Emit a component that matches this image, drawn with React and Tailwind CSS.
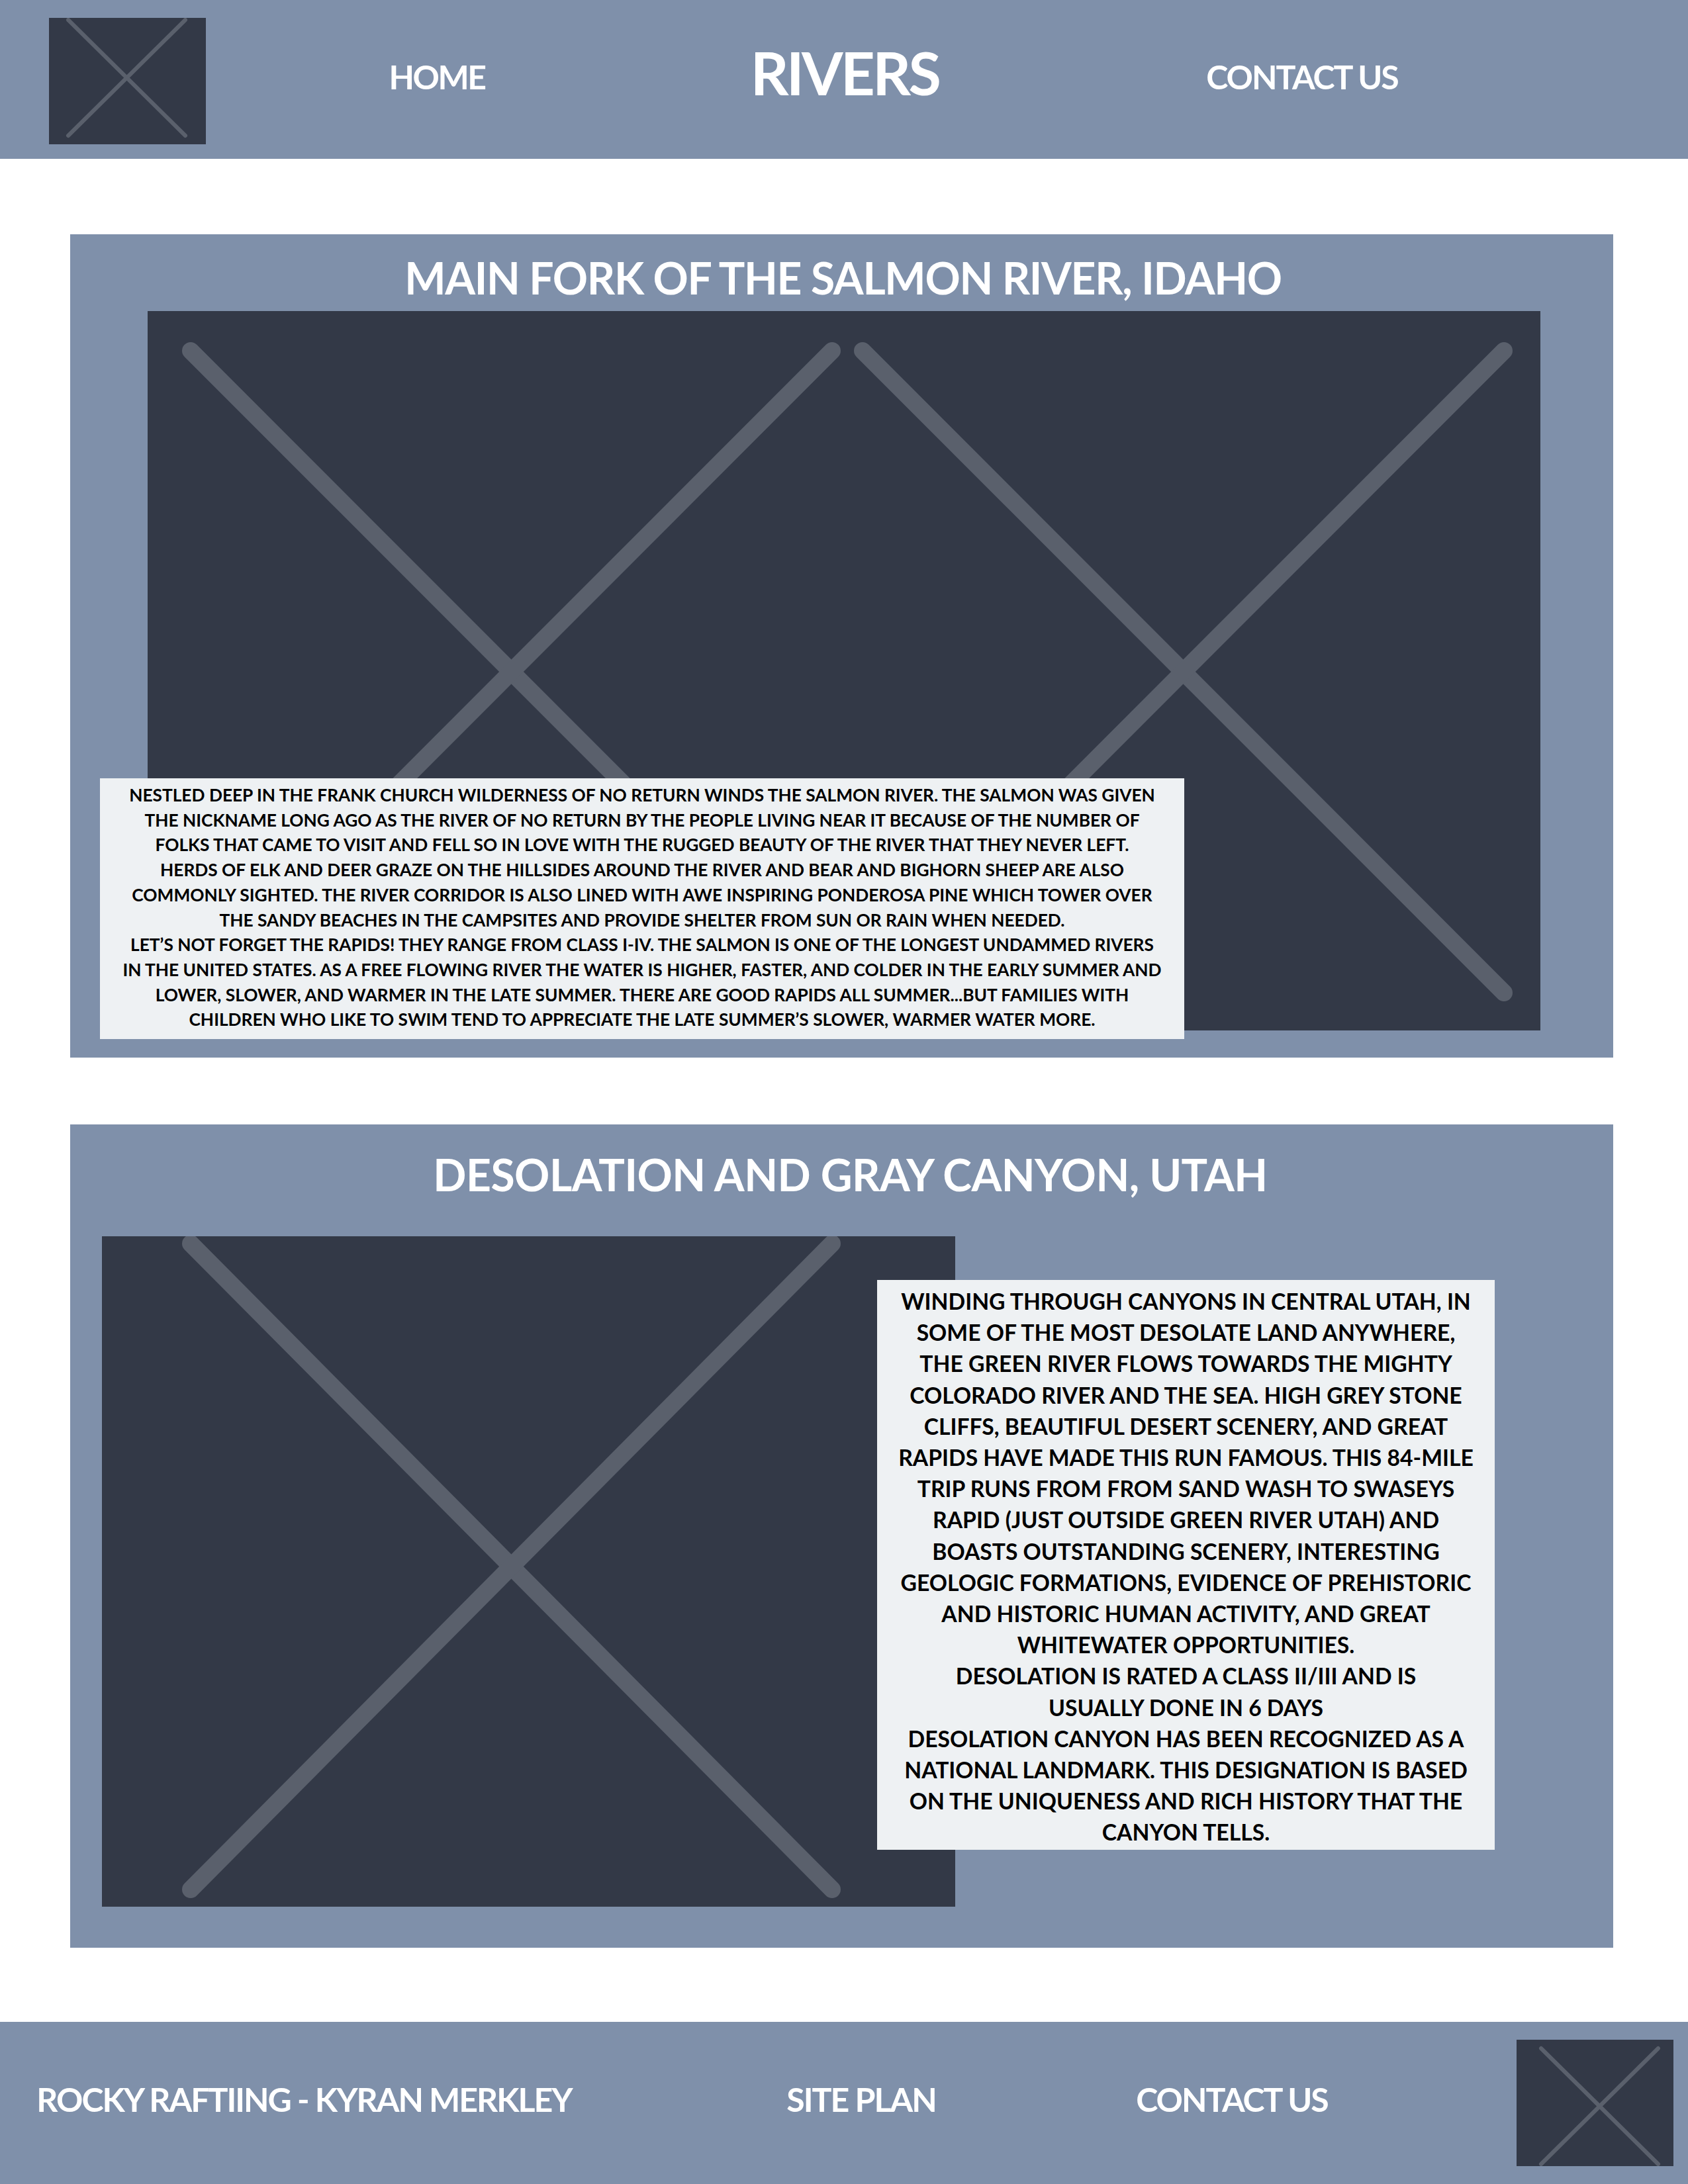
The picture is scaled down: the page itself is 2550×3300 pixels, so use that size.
import React from "react";

const salmonLines = [
  "NESTLED DEEP IN THE FRANK CHURCH WILDERNESS OF NO RETURN WINDS THE SALMON RIVER. THE SALMON WAS GIVEN",
  "THE NICKNAME LONG AGO AS THE RIVER OF NO RETURN BY THE PEOPLE LIVING NEAR IT BECAUSE OF THE NUMBER OF",
  "FOLKS THAT CAME TO VISIT AND FELL SO IN LOVE WITH THE RUGGED BEAUTY OF THE RIVER THAT THEY NEVER LEFT.",
  "HERDS OF ELK AND DEER GRAZE ON THE HILLSIDES AROUND THE RIVER AND BEAR AND BIGHORN SHEEP ARE ALSO",
  "COMMONLY SIGHTED. THE RIVER CORRIDOR IS ALSO LINED WITH AWE INSPIRING PONDEROSA PINE WHICH TOWER OVER",
  "THE SANDY BEACHES IN THE CAMPSITES AND PROVIDE SHELTER FROM SUN OR RAIN WHEN NEEDED.",
  "LET’S NOT FORGET THE RAPIDS! THEY RANGE FROM CLASS I-IV. THE SALMON IS ONE OF THE LONGEST UNDAMMED RIVERS",
  "IN THE UNITED STATES. AS A FREE FLOWING RIVER THE WATER IS HIGHER, FASTER, AND COLDER IN THE EARLY SUMMER AND",
  "LOWER, SLOWER, AND WARMER IN THE LATE SUMMER. THERE ARE GOOD RAPIDS ALL SUMMER...BUT FAMILIES WITH",
  "CHILDREN WHO LIKE TO SWIM TEND TO APPRECIATE THE LATE SUMMER’S SLOWER, WARMER WATER MORE.",
];

const desolationLines = [
  "WINDING THROUGH CANYONS IN CENTRAL UTAH, IN",
  "SOME OF THE MOST DESOLATE LAND ANYWHERE,",
  "THE GREEN RIVER FLOWS TOWARDS THE MIGHTY",
  "COLORADO RIVER AND THE SEA. HIGH GREY STONE",
  "CLIFFS, BEAUTIFUL DESERT SCENERY, AND GREAT",
  "RAPIDS HAVE MADE THIS RUN FAMOUS. THIS 84-MILE",
  "TRIP RUNS FROM FROM SAND WASH TO SWASEYS",
  "RAPID (JUST OUTSIDE GREEN RIVER UTAH) AND",
  "BOASTS OUTSTANDING SCENERY, INTERESTING",
  "GEOLOGIC FORMATIONS, EVIDENCE OF PREHISTORIC",
  "AND HISTORIC HUMAN ACTIVITY, AND GREAT",
  "WHITEWATER OPPORTUNITIES.",
  "DESOLATION IS RATED A CLASS II/III AND IS",
  "USUALLY DONE IN 6 DAYS",
  "DESOLATION CANYON HAS BEEN RECOGNIZED AS A",
  "NATIONAL LANDMARK. THIS DESIGNATION IS BASED",
  "ON THE UNIQUENESS AND RICH HISTORY THAT THE",
  "CANYON TELLS.",
];

// placeholder picture: dark box with crossed lines
const Placeholder = ({ w, h, lines, stroke }) => (
  <svg width={w} height={h} viewBox={`0 0 ${w} ${h}`} className="block">
    <rect width={w} height={h} fill="#333947" />
    {lines.map(([x1, y1, x2, y2], i) => (
      <line
        key={i}
        x1={x1}
        y1={y1}
        x2={x2}
        y2={y2}
        stroke="#5a606c"
        strokeWidth={stroke}
        strokeLinecap="round"
      />
    ))}
  </svg>
);

const Logo = ({ lines }) => (
  <Placeholder w={237} h={191} stroke={6} lines={lines} />
);

const App = () => {
  return (
    <div className="w-[2550px] bg-white [font-family:Lato,sans-serif] font-bold">
      {/* header */}
      <header className="h-[240px] bg-[#7f90aa] flex items-center text-white">
        <div className="ml-[74px] mt-[5px]">
          <Logo lines={[[29, 3, 206, 178], [206, 3, 29, 178]]} />
        </div>
        <div className="ml-[249px] w-[200px] text-center text-[50px] tracking-[-0.05em] leading-none mt-[-8px]">
          HOME
        </div>
        <div className="ml-[316px] w-[400px] text-center text-[90px] tracking-[-0.04em] leading-none mt-[-22px]">
          RIVERS
        </div>
        <div className="ml-[291px] w-[400px] text-center text-[50px] tracking-[-0.04em] leading-none mt-[-8px]">
          CONTACT US
        </div>
      </header>

      {/* salmon river */}
      <section className="relative mt-[114px] ml-[106px] w-[2331px] h-[1244px] bg-[#7f90aa]">
        <h2 className="pt-[33px] pl-[4px] h-[116px] text-center text-white text-[66px] tracking-[-0.02em] leading-none">
          MAIN FORK OF THE SALMON RIVER, IDAHO
        </h2>
        <div className="ml-[117px]">
          <Placeholder
            w={2104}
            h={1087}
            stroke={26}
            lines={[
              [65, 60, 1034, 1030],
              [1034, 60, 65, 1030],
              [1080, 60, 2049, 1030],
              [2049, 60, 1080, 1030],
            ]}
          />
        </div>
        <div className="absolute left-[45px] top-[822px] w-[1638px] h-[394px] bg-[#eef1f3] pt-[7px] text-center text-black text-[26.3px] leading-[37.7px]">
          {salmonLines.map((line) => (
            <div key={line} className="whitespace-nowrap">
              {line}
            </div>
          ))}
        </div>
      </section>

      {/* desolation canyon */}
      <section className="relative mt-[101px] ml-[106px] w-[2331px] h-[1244px] bg-[#7f90aa]">
        <h2 className="pt-[43px] pl-[26px] h-[169px] text-center text-white text-[66px] tracking-[-0.008em] leading-none">
          DESOLATION AND GRAY CANYON, UTAH
        </h2>
        <div className="ml-[48px]">
          <Placeholder
            w={1289}
            h={1013}
            stroke={26}
            lines={[
              [134, 11, 1103, 987],
              [1103, 11, 134, 987],
            ]}
          />
        </div>
        <div className="absolute left-[1219px] top-[235px] w-[933px] h-[861px] bg-[#eef1f3] pt-[9px] text-center text-black text-[33.7px] leading-[47.2px]">
          {desolationLines.map((line) => (
            <div key={line} className="whitespace-nowrap">
              {line}
            </div>
          ))}
        </div>
      </section>

      {/* footer */}
      <footer className="mt-[112px] h-[245px] bg-[#7f90aa] flex items-center text-white text-[50px] tracking-[-0.04em] leading-none">
        <div className="w-[919px] text-center mt-[-12px]">ROCKY RAFTIING - KYRAN MERKLEY</div>
        <div className="ml-[182px] w-[400px] text-center mt-[-12px]">SITE PLAN</div>
        <div className="ml-[160px] w-[400px] text-center mt-[-12px]">CONTACT US</div>
        <div className="ml-[230px]">
          <Logo lines={[[37, 13, 214, 188], [214, 13, 37, 188]]} />
        </div>
      </footer>
    </div>
  );
};

export default App;
